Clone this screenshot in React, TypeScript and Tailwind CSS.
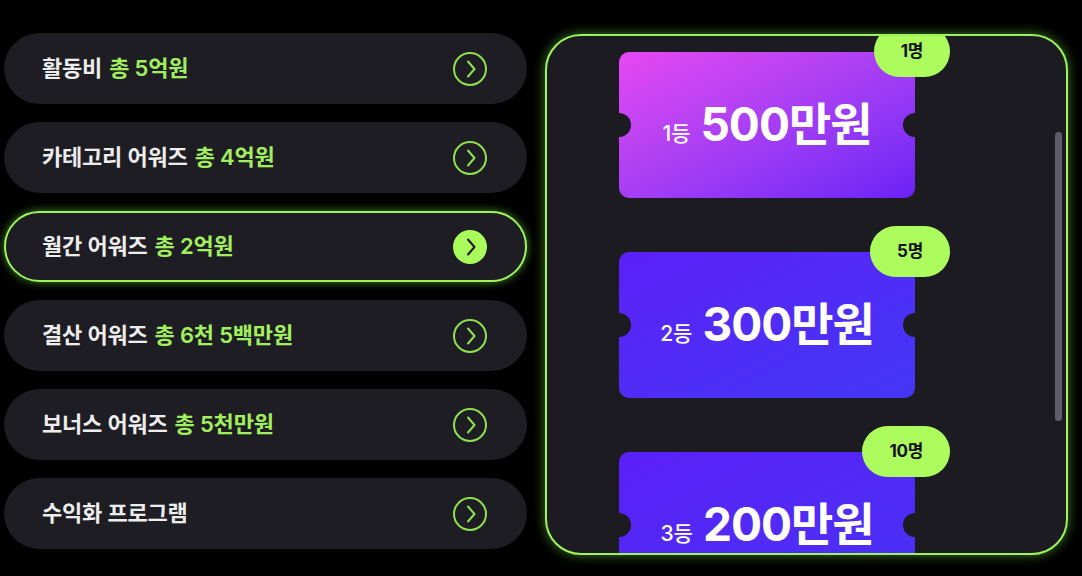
type Award = { title: string; amount?: string; active?: boolean };

const awards: Award[] = [
  { title: '활동비', amount: '총 5억원' },
  { title: '카테고리 어워즈', amount: '총 4억원' },
  { title: '월간 어워즈', amount: '총 2억원', active: true },
  { title: '결산 어워즈', amount: '총 6천 5백만원' },
  { title: '보너스 어워즈', amount: '총 5천만원' },
  { title: '수익화 프로그램' },
];

type Prize = { rank: string; amount: string; count: string; gradient: string };

const prizes: Prize[] = [
  { rank: '1등', amount: '500만원', count: '1명', gradient: 'bg-gradient-to-br from-[#e647f1] to-[#6b1ff6]' },
  { rank: '2등', amount: '300만원', count: '5명', gradient: 'bg-gradient-to-br from-[#5b1ff7] to-[#4336f5]' },
  { rank: '3등', amount: '200만원', count: '10명', gradient: 'bg-gradient-to-br from-[#5a1ff7] to-[#4832f5]' },
];

function Chevron({ color }: { color: string }) {
  return (
    <svg width="10" height="18" viewBox="0 0 10 18" fill="none" className={color}>
      <path d="M2 1.5 L8.5 9 L2 16.5" stroke="currentColor" strokeWidth="2" strokeLinecap="round" strokeLinejoin="round" />
    </svg>
  );
}

function AwardRow({ award }: { award: Award }) {
  return (
    <div
      className={
        award.active
          ? 'flex h-[71px] items-center justify-between rounded-full border-2 border-[#9cf35a] bg-[#1e1d24] pl-[36px] pr-[38px] shadow-[0_0_10px_rgba(130,240,70,0.55)]'
          : 'flex h-[71px] items-center justify-between rounded-full bg-[#1e1d24] pl-[38px] pr-[40px]'
      }
    >
      <p className="text-[22px] font-semibold tracking-[-0.2px] text-[#ededed]">
        {award.title}
        {award.amount && <span className="ml-[7px] text-[#a2ef5d]">{award.amount}</span>}
      </p>
      {award.active ? (
        <span className="flex h-[34px] w-[34px] items-center justify-center rounded-full bg-[#aafc5c] pl-[1px]">
          <Chevron color="text-[#1b1b1b]" />
        </span>
      ) : (
        <span className="flex h-[34px] w-[34px] items-center justify-center rounded-full border-2 border-[#8fe04d] pl-[1px]">
          <Chevron color="text-[#8fe04d]" />
        </span>
      )}
    </div>
  );
}

function Ticket({ prize }: { prize: Prize }) {
  return (
    <div className={`relative ml-[72px] flex h-[146px] w-[296px] shrink-0 items-center justify-center rounded-[10px] ${prize.gradient}`}>
      <span className="absolute -left-[12px] top-1/2 h-[24px] w-[24px] -translate-y-1/2 rounded-full bg-[#1c1b22]" />
      <span className="absolute -right-[12px] top-1/2 h-[24px] w-[24px] -translate-y-1/2 rounded-full bg-[#1c1b22]" />
      <p className="flex items-baseline gap-[10px] text-white">
        <span className="text-[21px] font-medium">{prize.rank}</span>
        <span className="text-[46px] font-bold leading-none tracking-[-1px]">{prize.amount}</span>
      </p>
      <span className="absolute -right-[35px] -top-[26px] flex h-[51px] items-center rounded-full bg-[#acfc5e] px-[27px] text-[17px] font-bold tracking-[-0.3px] text-[#111]">
        {prize.count}
      </span>
    </div>
  );
}

export default function App() {
  return (
    <div
      className="flex h-[576px] w-full items-start gap-[18px] bg-black pl-[4px] pt-[33px]"
      style={{ fontFamily: 'Inter, "Noto Sans CJK KR", sans-serif' }}
    >
      <div className="flex w-[523px] flex-col gap-[18px]">
        {awards.map((a) => (
          <AwardRow key={a.title} award={a} />
        ))}
      </div>

      <div className="relative mt-[1px] h-[521px] w-[523px] overflow-hidden rounded-[36px] border-2 border-[#9cf35a] bg-[#1c1b22] shadow-[0_0_12px_rgba(130,240,70,0.5)]">
        <div className="flex flex-col gap-[54px] pt-[16px]">
          {prizes.map((p) => (
            <Ticket key={p.rank} prize={p} />
          ))}
        </div>
        <div className="absolute right-[4px] top-[96px] h-[289px] w-[7px] rounded-full bg-[#5f5c6b]" />
      </div>
    </div>
  );
}
